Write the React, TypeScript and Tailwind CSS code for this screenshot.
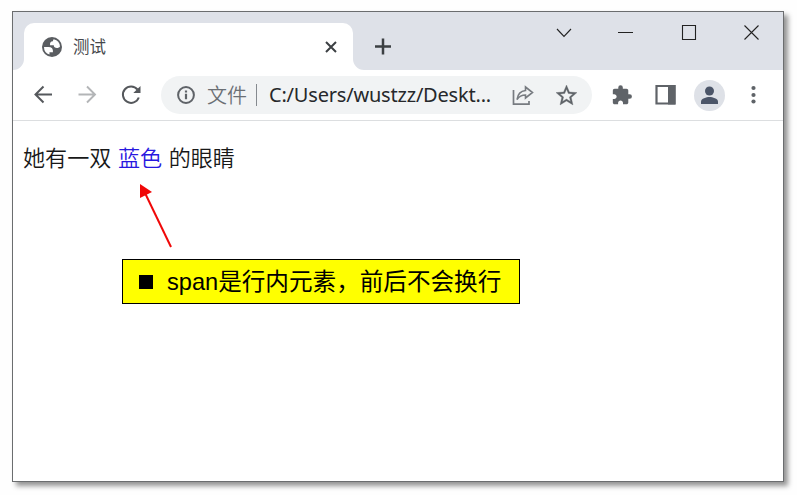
import type { ReactNode } from 'react';

type IconProps = { box: string; className: string; children: ReactNode };

function Icon({ box, className, children }: IconProps) {
  return (
    <svg viewBox={box} className={`block shrink-0 ${className}`} fill="none" stroke="currentColor">
      {children}
    </svg>
  );
}

function TabStrip() {
  return (
    <div className="flex h-[58px] items-end bg-[#dee1e8]">
      <Icon box="0 0 11 58" className="h-[58px] w-[11px] text-white">
        <path d="M0 58A11 11 0 0 0 11 47V58Z" fill="currentColor" stroke="none" />
      </Icon>
      <div className="flex h-[47px] w-[329px] shrink-0 items-center rounded-t-[10px] bg-white pr-[16px] pl-[18px]">
        <Icon box="2 2 20 20" className="h-[20px] w-[20px] text-[#5a5d61]">
          <circle cx="12" cy="12" r="10" fill="currentColor" stroke="none" />
          <path
            d="M4 12H8.400C11.807 12.022 13.322 13.730 12.943 17.127H9.488V19.597A8 8 0 0 1 4 12ZM19.986 11.514C19.327 12.504 18.332 13 17 13C14.863 13 13.794 12.084 13.794 10.250H10.046C9.772 7.522 10.729 6.158 12.916 6.158C12.916 5.183 13.243 4.561 13.727 4.188A8 8 0 0 1 19.986 11.514Z"
            fill="#fff"
            stroke="none"
          />
        </Icon>
        <span className="ml-[11px] text-[16.5px] leading-[24px] text-[#45484c]">测试</span>
        <Icon box="0 0 12 12" className="ml-auto h-[12px] w-[12px] text-[#3c4043]">
          <path d="M1 1L11 11M11 1L1 11" strokeWidth="2" />
        </Icon>
      </div>
      <Icon box="0 0 11 58" className="h-[58px] w-[11px] text-white">
        <path d="M11 58A11 11 0 0 1 0 47V58Z" fill="currentColor" stroke="none" />
      </Icon>
      <Icon box="364 12 36 58" className="h-[58px] w-[36px] text-[#3c4043]">
        <path d="M375 46.5H391M383 38.5V54.5" strokeWidth="2.5" />
      </Icon>
      <Icon box="540 12 243 58" className="ml-auto h-[58px] w-[243px] text-[#222]">
        <path d="M557 29L564 36.5L571 29" strokeWidth="1.1" />
        <path d="M618 32.5H633M682.5 25.5H695.5V39.5H682.5Z" strokeWidth="1.1" />
        <path d="M744.5 25.5L758.5 39.5M758.5 25.5L744.5 39.5" strokeWidth="1.1" />
      </Icon>
    </div>
  );
}

function AddressBar() {
  return (
    <div className="flex h-[38px] w-[431px] shrink-0 items-center rounded-full bg-[#f1f3f4]">
      <Icon box="0 0 18 18" className="ml-[16px] h-[18px] w-[18px] text-[#5f6368]">
        <circle cx="9" cy="9" r="7.9" strokeWidth="2" />
        <path d="M9 7.8V13.2M9 4.6V6.4" strokeWidth="2.2" />
      </Icon>
      <span className="ml-[12px] w-[40px] font-['Noto_Sans_CJK_SC',sans-serif] text-[20px] leading-[30px] font-[350] whitespace-nowrap text-[#6b6f74]">
        文件
      </span>
      <span className="ml-[9px] h-[22px] w-px bg-[#858a8f]" />
      <span className="ml-[12px] w-[225px] text-[20px] leading-[30px] tracking-[-0.2px] whitespace-nowrap text-[#26282b]">
        C:/Users/wustzz/Deskt...
      </span>
      <Icon box="512 84 24 22" className="ml-[18px] h-[22px] w-[24px] text-[#777b80]">
        <path d="M513.5 90V104.2H529V101" strokeWidth="1.7" />
        <path d="M525.5 87L532.5 92.500L525.5 98V95C522 95 519 96.5 517 99.500C517.700 94.500 520.500 91 525.500 90.500Z" strokeWidth="1.6" />
      </Icon>
      <Icon box="2 2 20 20" className="ml-[20px] h-[21px] w-[21px] text-[#5f6368]">
        <path
          d="M22 9.24l-7.19-.62L12 2 9.19 8.63 2 9.24l5.46 4.73L5.82 21 12 17.27 18.18 21l-1.63-7.03L22 9.24zM12 15.4l-3.76 2.27 1-4.28-3.32-2.88 4.38-.38L12 6.1l1.71 4.04 4.38.38-3.32 2.88 1 4.28L12 15.4z"
          fill="currentColor"
          strokeWidth=".3"
        />
      </Icon>
    </div>
  );
}

function Toolbar() {
  return (
    <div className="flex h-[51px] items-center border-b border-[#dcdee0] bg-white">
      <Icon box="13 70 148 50" className="h-[50px] w-[148px] text-[#55585c]">
        <path d="M52 94.5H36M43.5 86.5L35.5 94.5L43.5 102.5" strokeWidth="2" />
        <path d="M78.5 94.5H94.5M87 86.5L95 94.5L87 102.5" strokeWidth="1.9" className="text-[#b3b5b7]" stroke="currentColor" />
        <path d="M137.500 89.500A8.200 8.200 0 1 0 138.800 97.500" strokeWidth="2" />
        <path d="M140.5 86V93H133.3Z" fill="currentColor" stroke="none" />
      </Icon>
      <AddressBar />
      <Icon box="592 70 191 50" className="h-[50px] w-[191px] text-[#5f6368]">
        <path
          transform="translate(611 84.3) scale(.91)"
          d="M20.5 11H19V7c0-1.1-.9-2-2-2h-4V3.5a2.5 2.5 0 0 0-5 0V5H4c-1.1 0-1.990.9-1.990 2v3.8H3.5c1.490 0 2.7 1.210 2.7 2.7s-1.210 2.7-2.7 2.7H2V20c0 1.1.9 2 2 2h3.8v-1.5c0-1.490 1.210-2.7 2.7-2.7s2.7 1.210 2.7 2.7V22H17c1.1 0 2-.9 2-2v-4h1.5a2.5 2.5 0 0 0 0-5z"
          fill="currentColor"
          stroke="none"
        />
        <path d="M656.5 86H674.5V103.500H656.5Z" strokeWidth="2.2" />
        <path d="M668 85H675.5V104.500H668Z" fill="currentColor" stroke="none" />
        <circle cx="709.5" cy="95.5" r="15.5" fill="#dee1e7" stroke="none" />
        <g className="text-[#4b5568]" fill="currentColor" stroke="none">
          <circle cx="709.5" cy="91" r="4.5" />
          <path d="M701 104V101.500C701 98.500 706.500 97 709.500 97S718 98.500 718 101.500V104Z" />
        </g>
        <g fill="currentColor" stroke="none">
          <circle cx="753.5" cy="88" r="2.1" />
          <circle cx="753.5" cy="95" r="2.1" />
          <circle cx="753.5" cy="101.500" r="2.1" />
        </g>
      </Icon>
    </div>
  );
}

export default function App() {
  return (
    <div className="h-[495px] w-[797px] overflow-hidden bg-[#fefefe] pt-[11px] pl-[12px] font-['Noto_Sans','Noto_Sans_CJK_SC',sans-serif]">
      <div className="h-[471px] w-[772px] border border-[#6b6d6f] bg-white shadow-[4px_4px_5px_rgba(0,0,0,0.42)]">
        <TabStrip />
        <Toolbar />
        <main className="relative">
          <p className="pt-[19px] pl-[10px] font-['Noto_Sans_CJK_SC',sans-serif] text-[22.1px] leading-[32px] font-[350] [word-spacing:1.6px] whitespace-nowrap text-[#181818]">
            她有一双 <span className="text-[#2818df]">蓝色</span> 的眼睛
          </p>
          <svg viewBox="135 180 42 72" className="absolute top-[59px] left-[122px] h-[72px] w-[42px]">
            <path d="M145 193L171 247" stroke="#f00808" strokeWidth="2" />
            <path d="M140 184L152 192L140 198Z" fill="#f00808" />
          </svg>
          <div className="mt-[87px] ml-[109px] flex h-[45px] w-[398px] items-center border border-black bg-[#ffff00] pl-[16px] text-black">
            <span className="h-[14px] w-[14px] bg-black" />
            <span className="ml-[14px] font-['Liberation_Sans','Noto_Sans_CJK_SC',sans-serif] text-[23.6px] leading-[34px] whitespace-nowrap">
              span是行内元素，前后不会换行
            </span>
          </div>
        </main>
      </div>
    </div>
  );
}
